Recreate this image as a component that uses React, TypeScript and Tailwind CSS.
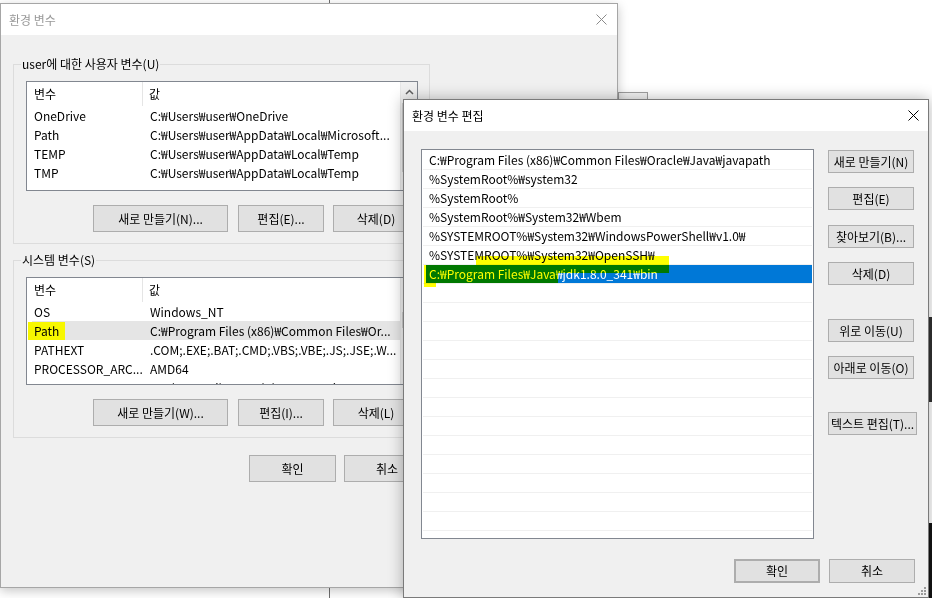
import type { ReactNode } from "react";

type Row = { name: string; value: string; selected?: boolean; mark?: boolean };

const userVars: Row[] = [
  { name: "OneDrive", value: "C:₩Users₩user₩OneDrive" },
  { name: "Path", value: "C:₩Users₩user₩AppData₩Local₩Microsoft..." },
  { name: "TEMP", value: "C:₩Users₩user₩AppData₩Local₩Temp" },
  { name: "TMP", value: "C:₩Users₩user₩AppData₩Local₩Temp" },
];

const systemVars: Row[] = [
  { name: "OS", value: "Windows_NT" },
  { name: "Path", value: "C:₩Program Files (x86)₩Common Files₩Or...", selected: true, mark: true },
  { name: "PATHEXT", value: ".COM;.EXE;.BAT;.CMD;.VBS;.VBE;.JS;.JSE;.W..." },
  { name: "PROCESSOR_ARC...", value: "AMD64" },
  { name: "PROCESSOR_IDE...", value: "Intel64 Family 6 Model 142 Stepping 10, G..." },
];

const pathEntries = [
  "C:₩Program Files (x86)₩Common Files₩Oracle₩Java₩javapath",
  "%SystemRoot%₩system32",
  "%SystemRoot%",
  "%SystemRoot%₩System32₩Wbem",
  "%SYSTEMROOT%₩System32₩WindowsPowerShell₩v1.0₩",
  "%SYSTEMROOT%₩System32₩OpenSSH₩",
  "C:₩Program Files₩Java₩jdk1.8.0_341₩bin",
];

function CloseX({ className }: { className: string }) {
  return (
    <svg width="11" height="11" viewBox="0 0 11 11" className={className}>
      <path d="M0.5 0.5 L10.5 10.5 M10.5 0.5 L0.5 10.5" stroke="currentColor" strokeWidth="1" fill="none" />
    </svg>
  );
}

function Btn({ children, className = "" }: { children: ReactNode; className?: string }) {
  return (
    <button
      className={`flex shrink-0 items-center justify-center whitespace-nowrap border border-[#adadad] bg-[#e1e1e1] text-[12px] text-black ${className}`}
    >
      {children}
    </button>
  );
}

// list view with header, used twice in the back dialog
function VarList({ rows, h, thumb }: { rows: Row[]; h: string; thumb: string }) {
  return (
    <div className={`flex w-[392px] overflow-hidden border border-[#828790] bg-white ${h}`}>
      <div className="flex min-w-0 flex-1 flex-col">
        <div className="flex h-[24px] shrink-0">
          <div className="ml-[5px] flex w-[111px] items-center border-r border-[#e5e5e5] pl-[2px]">변수</div>
          <div className="flex items-center pl-[6px]">값</div>
        </div>
        {rows.map((r) => (
          <div
            key={r.name}
            className={`ml-[5px] flex h-[19px] shrink-0 items-center ${r.selected ? "bg-[#e5e5e5]" : ""}`}
          >
            <div className="flex h-full w-[111px] items-center pl-[2px] whitespace-nowrap">
              {r.mark ? (
                <span className="-ml-[6px] flex h-[18px] items-center bg-[#f7f700] px-[6px]">{r.name}</span>
              ) : (
                r.name
              )}
            </div>
            <div className="pl-[7px] whitespace-nowrap">{r.value}</div>
          </div>
        ))}
      </div>
      <div className="flex w-[17px] shrink-0 flex-col items-center border-l border-[#e6e6e6] bg-[#f0f0f0]">
        <div className="flex h-[20px] items-center">
          <svg width="9" height="6" viewBox="0 0 9 6">
            <path d="M1 5 L4.5 1.5 L8 5" stroke="#606060" strokeWidth="1.5" fill="none" />
          </svg>
        </div>
        <div className={`w-[15px] bg-[#cdcdcd] ${thumb}`} />
      </div>
    </div>
  );
}

function BackDialog() {
  return (
    <div className="absolute left-0 top-[3px] flex h-[585px] w-[618px] flex-col border border-[#a6a6a6] bg-[#f0f0f0] shadow-[0_3px_10px_rgba(0,0,0,0.22)]">
      <div className="flex h-[31px] shrink-0 items-center justify-between bg-white pl-[8px] pr-[10px]">
        <span className="text-[#999999]">환경 변수</span>
        <CloseX className="text-[#8a8a8a]" />
      </div>
      <div className="flex flex-col pl-[12px] pt-[21px]">
        <fieldset className="w-[417px] border border-[#dcdcdc]">
          <legend className="ml-[7px] px-[1px] leading-[16px]">user에 대한 사용자 변수(U)</legend>
          <div className="flex flex-col pb-[11px] pl-[12px] pt-[9px]">
            <VarList rows={userVars} h="h-[110px]" thumb="h-[69px] mt-[1px]" />
            <div className="mt-[14px] flex gap-[9px]">
              <Btn className="ml-[67px] mr-[1px] h-[27px] w-[135px]">새로 만들기(N)...</Btn>
              <Btn className="h-[27px] w-[86px]">편집(E)...</Btn>
              <Btn className="h-[27px] w-[86px]">삭제(D)</Btn>
            </div>
          </div>
        </fieldset>
        <fieldset className="mt-[8px] w-[417px] border border-[#dcdcdc]">
          <legend className="ml-[7px] px-[1px] leading-[16px]">시스템 변수(S)</legend>
          <div className="flex flex-col pb-[11px] pl-[12px] pt-[9px]">
            <VarList rows={systemVars} h="h-[108px]" thumb="h-[16px] mt-[14px] bg-[#a8a8a8]" />
            <div className="mt-[14px] flex gap-[9px]">
              <Btn className="ml-[67px] mr-[1px] h-[27px] w-[135px]">새로 만들기(W)...</Btn>
              <Btn className="h-[27px] w-[86px]">편집(I)...</Btn>
              <Btn className="h-[27px] w-[86px]">삭제(L)</Btn>
            </div>
          </div>
        </fieldset>
        <div className="mt-[17px] flex w-[417px] justify-end gap-[8px]">
          <Btn className="h-[27px] w-[87px]">확인</Btn>
          <Btn className="h-[27px] w-[86px]">취소</Btn>
        </div>
      </div>
    </div>
  );
}

function EditDialog() {
  const rows = Array.from({ length: 21 }, (_, i) => pathEntries[i] ?? "");
  return (
    <div className="absolute left-[403px] top-[99px] flex h-[499px] w-[526px] flex-col border border-[#7a7a7a] bg-[#f0f0f0] shadow-[0_0_14px_rgba(0,0,0,0.3)]">
      <div className="flex h-[31px] shrink-0 items-center justify-between bg-white pl-[8px] pr-[9px]">
        <span>환경 변수 편집</span>
        <CloseX className="text-black" />
      </div>
      <div className="flex pl-[17px] pt-[18px]">
        <div className="relative flex h-[390px] w-[393px] flex-col overflow-hidden border border-[#828790] bg-white pt-[1px]">
          {rows.map((t, i) => (
            <div key={i} className="mx-[1px] h-[19px] shrink-0 border-b border-[#f0f0f0]">
              <div
                className={`ml-[3px] flex h-[18px] items-center pl-[3px] whitespace-nowrap ${
                  i === 6 ? "bg-[#0078d7] text-white" : ""
                }`}
              >
                {t}
              </div>
            </div>
          ))}
          {/* highlighter marks drawn over the selected entry */}
          <div className="absolute left-[54px] top-[106px] h-[9px] w-[193px] bg-[#ffff00] mix-blend-multiply" />
          <div className="absolute left-[2px] top-[115px] h-[8px] w-[245px] bg-[#ffff00] mix-blend-multiply" />
          <div className="absolute left-[2px] top-[123px] h-[10px] w-[134px] bg-[#ffff00] mix-blend-multiply" />
          <div className="absolute left-[2px] top-[133px] h-[4px] w-[12px] bg-[#ffff00] mix-blend-multiply" />
        </div>
        <div className="ml-[14px] flex w-[86px] flex-col">
          <Btn className="mt-[1px] h-[23px] w-[86px]">새로 만들기(N)</Btn>
          <Btn className="mt-[14px] h-[23px] w-[86px]">편집(E)</Btn>
          <Btn className="mt-[15px] h-[23px] w-[86px]">찾아보기(B)...</Btn>
          <Btn className="mt-[14px] h-[23px] w-[86px]">삭제(D)</Btn>
          <Btn className="mt-[34px] h-[23px] w-[86px]">위로 이동(U)</Btn>
          <Btn className="mt-[14px] h-[23px] w-[86px]">아래로 이동(O)</Btn>
          <Btn className="mt-[33px] h-[23px] w-[89px]">텍스트 편집(T)...</Btn>
        </div>
      </div>
      <div className="mt-[20px] flex justify-end gap-[9px] pr-[13px]">
        <Btn className="h-[24px] w-[86px] border-2 border-[#0078d7]">확인</Btn>
        <Btn className="h-[24px] w-[86px]">취소</Btn>
      </div>
      <svg width="8" height="8" viewBox="0 0 8 8" className="absolute bottom-[2px] right-[2px]">
        <g fill="#9a9a9a">
          <rect x="6" y="0" width="2" height="2" />
          <rect x="3" y="3" width="2" height="2" />
          <rect x="6" y="3" width="2" height="2" />
          <rect x="0" y="6" width="2" height="2" />
          <rect x="3" y="6" width="2" height="2" />
          <rect x="6" y="6" width="2" height="2" />
        </g>
      </svg>
    </div>
  );
}

export default function App() {
  return (
    <div className="relative h-[598px] w-[932px] overflow-hidden bg-white font-['Noto_Sans_CJK_KR','Noto_Sans',sans-serif] text-[12px] leading-none text-black">
      {/* window behind both dialogs */}
      <div className="absolute left-[329px] top-0 h-[598px] w-[620px] border-l border-[#6e6e6e] bg-white">
        <div className="absolute left-[288px] top-[92px] h-[12px] w-[30px] border border-[#a0a0a0] bg-[#f4f4f4]" />
      </div>
      <BackDialog />
      <EditDialog />
      <div className="absolute left-[929px] top-[317px] h-[85px] w-[3px] bg-[#2b2b2b]" />
      <div className="absolute left-[929px] top-[523px] h-[75px] w-[3px] bg-[#111111]" />
    </div>
  );
}
